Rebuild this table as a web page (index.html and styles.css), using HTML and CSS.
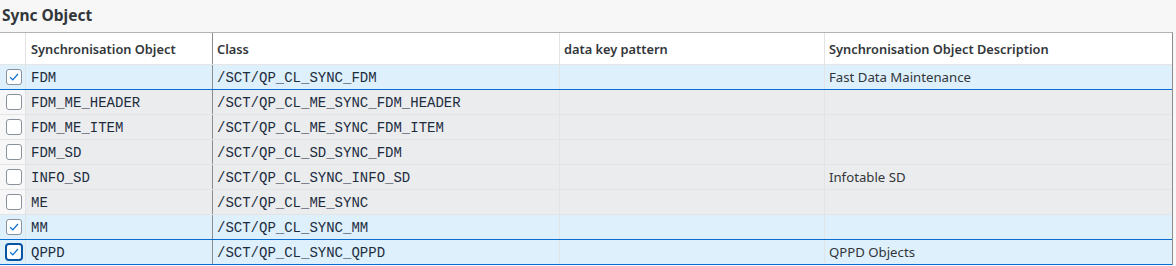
FILE: index.html
```html
<!DOCTYPE html>
<html>
<head>
<meta charset="utf-8">
<link rel="stylesheet" href="styles.css">
</head>
<body>
<div class="page">
  <div class="title">Sync Object</div>
  <div class="table">
    <div class="row head">
      <div class="cell sel"></div>
      <div class="cell c1">Synchronisation Object</div>
      <div class="cell c2">Class</div>
      <div class="cell c3">data key pattern</div>
      <div class="cell c4">Synchronisation Object Description</div>
    </div>
    <div class="row selected">
      <div class="cell sel"><span class="cb checked"><svg viewBox="0 0 16 16"><path d="M3.5 8.2 L6.6 11.2 L12.5 4.6"/></svg></span></div>
      <div class="cell c1 mono">FDM</div>
      <div class="cell c2 mono">/SCT/QP_CL_SYNC_FDM</div>
      <div class="cell c3"></div>
      <div class="cell c4">Fast Data Maintenance</div>
    </div>
    <div class="row">
      <div class="cell sel"><span class="cb"></span></div>
      <div class="cell c1 mono">FDM_ME_HEADER</div>
      <div class="cell c2 mono">/SCT/QP_CL_ME_SYNC_FDM_HEADER</div>
      <div class="cell c3"></div>
      <div class="cell c4"></div>
    </div>
    <div class="row">
      <div class="cell sel"><span class="cb"></span></div>
      <div class="cell c1 mono">FDM_ME_ITEM</div>
      <div class="cell c2 mono">/SCT/QP_CL_ME_SYNC_FDM_ITEM</div>
      <div class="cell c3"></div>
      <div class="cell c4"></div>
    </div>
    <div class="row">
      <div class="cell sel"><span class="cb"></span></div>
      <div class="cell c1 mono">FDM_SD</div>
      <div class="cell c2 mono">/SCT/QP_CL_SD_SYNC_FDM</div>
      <div class="cell c3"></div>
      <div class="cell c4"></div>
    </div>
    <div class="row">
      <div class="cell sel"><span class="cb"></span></div>
      <div class="cell c1 mono">INFO_SD</div>
      <div class="cell c2 mono">/SCT/QP_CL_SYNC_INFO_SD</div>
      <div class="cell c3"></div>
      <div class="cell c4">Infotable SD</div>
    </div>
    <div class="row">
      <div class="cell sel"><span class="cb"></span></div>
      <div class="cell c1 mono">ME</div>
      <div class="cell c2 mono">/SCT/QP_CL_ME_SYNC</div>
      <div class="cell c3"></div>
      <div class="cell c4"></div>
    </div>
    <div class="row selected">
      <div class="cell sel"><span class="cb checked"><svg viewBox="0 0 16 16"><path d="M3.5 8.2 L6.6 11.2 L12.5 4.6"/></svg></span></div>
      <div class="cell c1 mono">MM</div>
      <div class="cell c2 mono">/SCT/QP_CL_SYNC_MM</div>
      <div class="cell c3"></div>
      <div class="cell c4"></div>
    </div>
    <div class="row selected">
      <div class="cell sel"><span class="cb checked focus"><svg viewBox="0 0 16 16"><path d="M3.5 8.2 L6.6 11.2 L12.5 4.6"/></svg></span></div>
      <div class="cell c1 mono">QPPD</div>
      <div class="cell c2 mono">/SCT/QP_CL_SYNC_QPPD</div>
      <div class="cell c3"></div>
      <div class="cell c4">QPPD Objects</div>
    </div>
  </div>
</div>
</body>
</html>
```

FILE: styles.css
```css
html, body {
  margin: 0;
  padding: 0;
  background: #f7f7f7;
}
.page {
  width: 1176px;
  height: 266px;
  background: #f7f7f7;
  font-family: "Noto Sans", "Open Sans", sans-serif;
  color: #32363a;
}
.title {
  height: 32px;
  box-sizing: border-box;
  padding: 4px 0 0 2px;
  font-size: 15.5px;
  font-weight: 700;
  line-height: 22px;
}
.table {
  width: 1173px;
  border-top: 1px solid #b3b3b3;
  border-right: 1px solid #8c8c8c;
  box-sizing: border-box;
}
.row {
  display: grid;
  grid-template-columns: 26px 187px 347px 265px 347px;
  height: 25px;
  box-sizing: border-box;
  border-bottom: 1px solid #e3e4e6;
  background: #ebecee;
}
.row.head {
  height: 32px;
  background: #fff;
  border-bottom: 1px solid #e5e5e5;
}
.row.selected {
  background: #ddf0fc;
  border-bottom: 1px solid #0a6ed1;
}
.cell {
  display: flex;
  align-items: center;
  padding-left: 4px;
  font-size: 13.2px;
  white-space: nowrap;
  overflow: hidden;
  border-right: 1px solid #e2e3e5;
  box-sizing: border-box;
}
.head .cell {
  font-weight: 600;
  font-size: 12.8px;
  padding-top: 1px;
}
.cell.c4 {
  border-right: none;
}
.cell.c1 {
  border-right: 1px solid #8c8c8c;
  padding-left: 5px;
}
.cell.sel {
  padding-left: 6px;
  background: #f7f7f7;
}
.head .cell.sel, .selected .cell.sel {
  background: transparent;
}
.mono {
  font-family: "Liberation Mono", "DejaVu Sans Mono", monospace;
  font-size: 14px;
  color: #1d2d3e;
  padding-top: 1px;
}
.cb {
  width: 16px;
  height: 16px;
  box-sizing: border-box;
  border: 1px solid #89919a;
  border-radius: 3px;
  background: #fff;
  display: flex;
  align-items: center;
  justify-content: center;
}
.cb svg {
  width: 14px;
  height: 14px;
  fill: none;
  stroke: #0a6ed1;
  stroke-width: 1.4;
}
.cb.focus {
  border: 2px solid #0854a0;
  width: 18px;
  height: 18px;
  margin-left: -1px;
  border-radius: 4px;
}
```
